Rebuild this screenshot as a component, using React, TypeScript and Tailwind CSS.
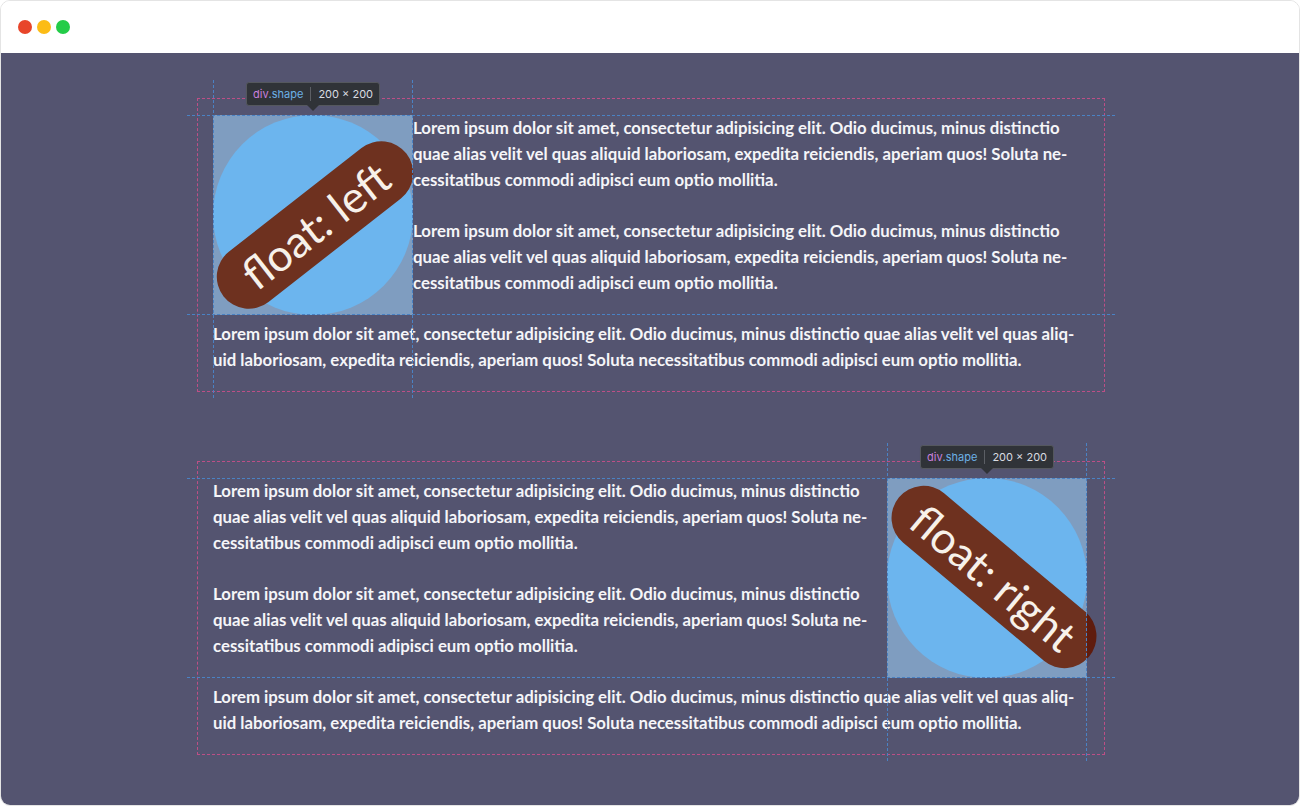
import React from 'react';

const LINES_SIDE = [
  'Lorem ipsum dolor sit amet, consectetur adipisicing elit. Odio ducimus, minus distinctio',
  'quae alias velit vel quas aliquid laboriosam, expedita reiciendis, aperiam quos! Soluta ne-',
  'cessitatibus commodi adipisci eum optio mollitia.',
];

const LINES_FULL = [
  'Lorem ipsum dolor sit amet, consectetur adipisicing elit. Odio ducimus, minus distinctio quae alias velit vel quas aliq-',
  'uid laboriosam, expedita reiciendis, aperiam quos! Soluta necessitatibus commodi adipisci eum optio mollitia.',
];

const Para: React.FC<{ lines: string[]; last?: boolean }> = ({ lines, last }) => (
  <p className={`whitespace-nowrap ${last ? '' : 'mb-[25px]'}`}>
    {lines.map((l, i) => (
      <React.Fragment key={i}>
        {l}
        {i < lines.length - 1 && <br />}
      </React.Fragment>
    ))}
  </p>
);

// devtools-like tooltip over the element
const Tip: React.FC = () => (
  <div className="absolute left-1/2 -translate-x-1/2 bottom-[204px] z-20 flex flex-col items-center">
    <div className="flex items-center h-[24px] px-[6px] rounded-[3px] bg-[#303338] border border-[#55585e] text-[11px] leading-none font-normal font-['Inter',sans-serif] whitespace-nowrap">
      <span className="text-[#c87fdc]">div</span>
      <span className="text-[#6cb0e6]">.shape</span>
      <span className="mx-[7px] w-px h-[14px] bg-[#5d6066]" />
      <span className="text-[#d9dce0]">200 × 200</span>
    </div>
    <svg width="12" height="6" viewBox="0 0 12 6" className="-mt-px">
      <path d="M0 0 L12 0 L6 6 Z" fill="#303338" />
    </svg>
  </div>
);

const Shape: React.FC<{ side: 'left' | 'right' }> = ({ side }) => {
  const isLeft = side === 'left';
  const pillPos = isLeft
    ? 'left-[102px] top-[110px] w-[232px] -rotate-[38deg]'
    : 'left-[107px] top-[99px] w-[248px] rotate-[40deg]';
  return (
    <div className={`relative w-[200px] h-[200px] ${isLeft ? 'float-left' : 'float-right mr-[2px]'}`}>
      <div className={`absolute h-[64px] rounded-full bg-[#5f1c0e] -translate-x-1/2 -translate-y-1/2 ${pillPos}`} />
      <div className="absolute inset-0 overflow-hidden bg-[#7f9dc0]">
        <div className="absolute inset-0 rounded-full bg-[#6cb5ee]" />
        <div
          className={`absolute h-[64px] rounded-full bg-[#6e311f] -translate-x-1/2 -translate-y-1/2 flex items-center justify-center ${pillPos}`}
        >
          <span className="text-[44px] leading-none font-normal text-[#f7f1ea] font-['Lato',sans-serif] whitespace-nowrap">
            float: {side}
          </span>
        </div>
      </div>
      <Tip />
    </div>
  );
};

const Block: React.FC<{ side: 'left' | 'right'; className?: string }> = ({ side, className }) => {
  const vx = side === 'left' ? ['left-[15px]', 'left-[214px]'] : ['left-[689px]', 'left-[888px]'];
  return (
    <div className={`relative w-[908px] ml-[196px] border border-dashed border-[#bd4f86] pt-[16px] pb-[18px] px-[15px] ${className ?? ''}`}>
      <Shape side={side} />
      <Para lines={LINES_SIDE} />
      <Para lines={LINES_SIDE} />
      <Para lines={LINES_FULL} last />
      {/* guide lines */}
      <div className="absolute left-[-11px] w-[928px] top-[16px] border-t border-dashed border-[#4a82c4] z-10" />
      <div className="absolute left-[-11px] w-[928px] top-[215px] border-t border-dashed border-[#4a82c4] z-10" />
      <div className={`absolute top-[-19px] h-[318px] border-l border-dashed border-[#4a82c4] z-10 ${vx[0]}`} />
      <div className={`absolute top-[-19px] h-[318px] border-l border-dashed border-[#4a82c4] z-10 ${vx[1]}`} />
    </div>
  );
};

export default function App() {
  return (
    <div className="w-[1300px] h-[806px] bg-white">
      <div className="h-full border border-[#e4e4e4] rounded-[10px] overflow-hidden flex flex-col">
        <div className="h-[52px] bg-white flex items-center gap-[5px] pl-[17px] shrink-0">
          <span className="w-[14px] h-[14px] rounded-full bg-[#e8452a]" />
          <span className="w-[14px] h-[14px] rounded-full bg-[#fcbc16]" />
          <span className="w-[14px] h-[14px] rounded-full bg-[#23cc48]" />
        </div>
        <div className="flex-1 bg-[#545470] pt-[45px] text-[#f5f5f8] font-bold text-[16.8px] leading-[26px] font-['Lato',sans-serif]">
          <Block side="left" />
          <Block side="right" className="mt-[69px]" />
        </div>
      </div>
    </div>
  );
}
